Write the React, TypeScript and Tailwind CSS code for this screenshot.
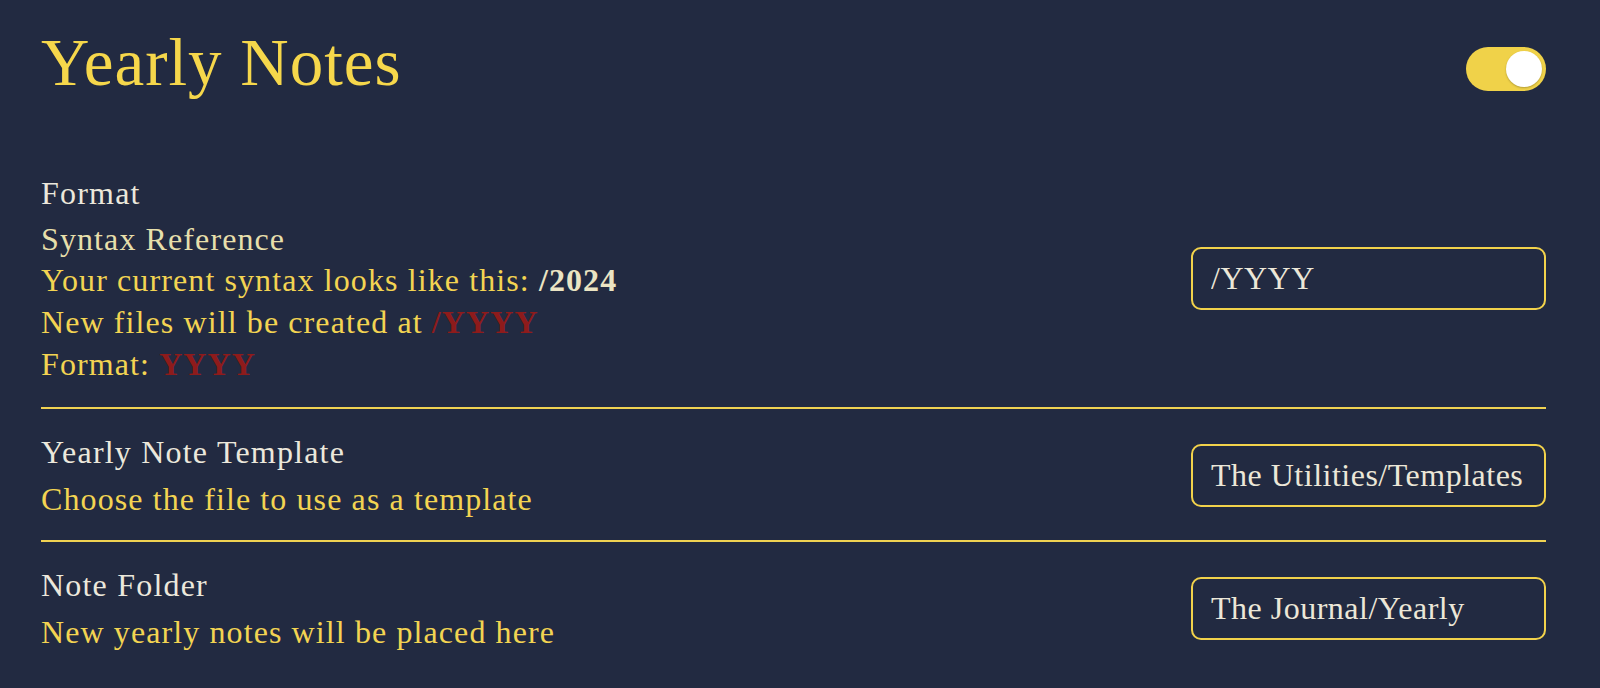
import React from "react";

const serif = "font-['Liberation_Serif','Times_New_Roman',serif]";

function TextBox({ value }: { value: string }) {
  return (
    <input
      readOnly
      defaultValue={value}
      className={`${serif} w-[355px] h-[63px] shrink-0 rounded-[10px] border-2 border-[#f2d24b] bg-transparent px-[18px] text-[32px] tracking-[0.5px] text-[#ece7d8] outline-none`}
    />
  );
}

function Row({
  label,
  children,
  value,
  pb = "pb-[20px]",
}: {
  label: string;
  children: React.ReactNode;
  value: string;
  pb?: string;
}) {
  return (
    <div className={`flex items-center justify-between pt-[22px] ${pb}`}>
      <div className="flex flex-col">
        <div className="text-[32px] leading-[42px] tracking-[1.2px] text-[#ece8dc]">{label}</div>
        <div className="mt-[5px] text-[32px] tracking-[1.1px] text-[#f3d452]">{children}</div>
      </div>
      <TextBox value={value} />
    </div>
  );
}

export default function App() {
  return (
    <div className={`${serif} min-h-screen bg-[#222a41] pl-[41px] pr-[54px]`}>
      <div className="flex items-start justify-between pt-[22px]">
        <h1 className="text-[67px] leading-[80px] tracking-[1px] text-[#f6d74b]">Yearly Notes</h1>
        <div className="mt-[25px] flex h-[44px] w-[80px] items-center justify-end rounded-full bg-[#f0d249] p-[4px]">
          <div className="h-[36px] w-[36px] rounded-full bg-white shadow-[0_1px_2px_rgba(0,0,0,0.25)]" />
        </div>
      </div>

      <div className="mt-[48px]">
        <Row label="Format" value="/YYYY" pb="pb-[22px]">
          <div className="leading-[40px] text-[#e7dfab]">Syntax Reference</div>
          <div className="leading-[42px]">
            Your current syntax looks like this:{" "}
            <span className="font-bold text-[#ebe4c3]">/2024</span>
          </div>
          <div className="leading-[42px]">
            New files will be created at <span className="font-bold text-[#8e1b1b]">/YYYY</span>
          </div>
          <div className="leading-[42px]">
            Format: <span className="font-bold text-[#8e1b1b]">YYYY</span>
          </div>
        </Row>
        <div className="h-[2px] bg-[#f0d252]" />
        <Row label="Yearly Note Template" value="The Utilities/Templates">
          <div className="leading-[42px]">Choose the file to use as a template</div>
        </Row>
        <div className="h-[2px] bg-[#f0d252]" />
        <Row label="Note Folder" value="The Journal/Yearly">
          <div className="leading-[42px]">New yearly notes will be placed here</div>
        </Row>
      </div>
    </div>
  );
}
